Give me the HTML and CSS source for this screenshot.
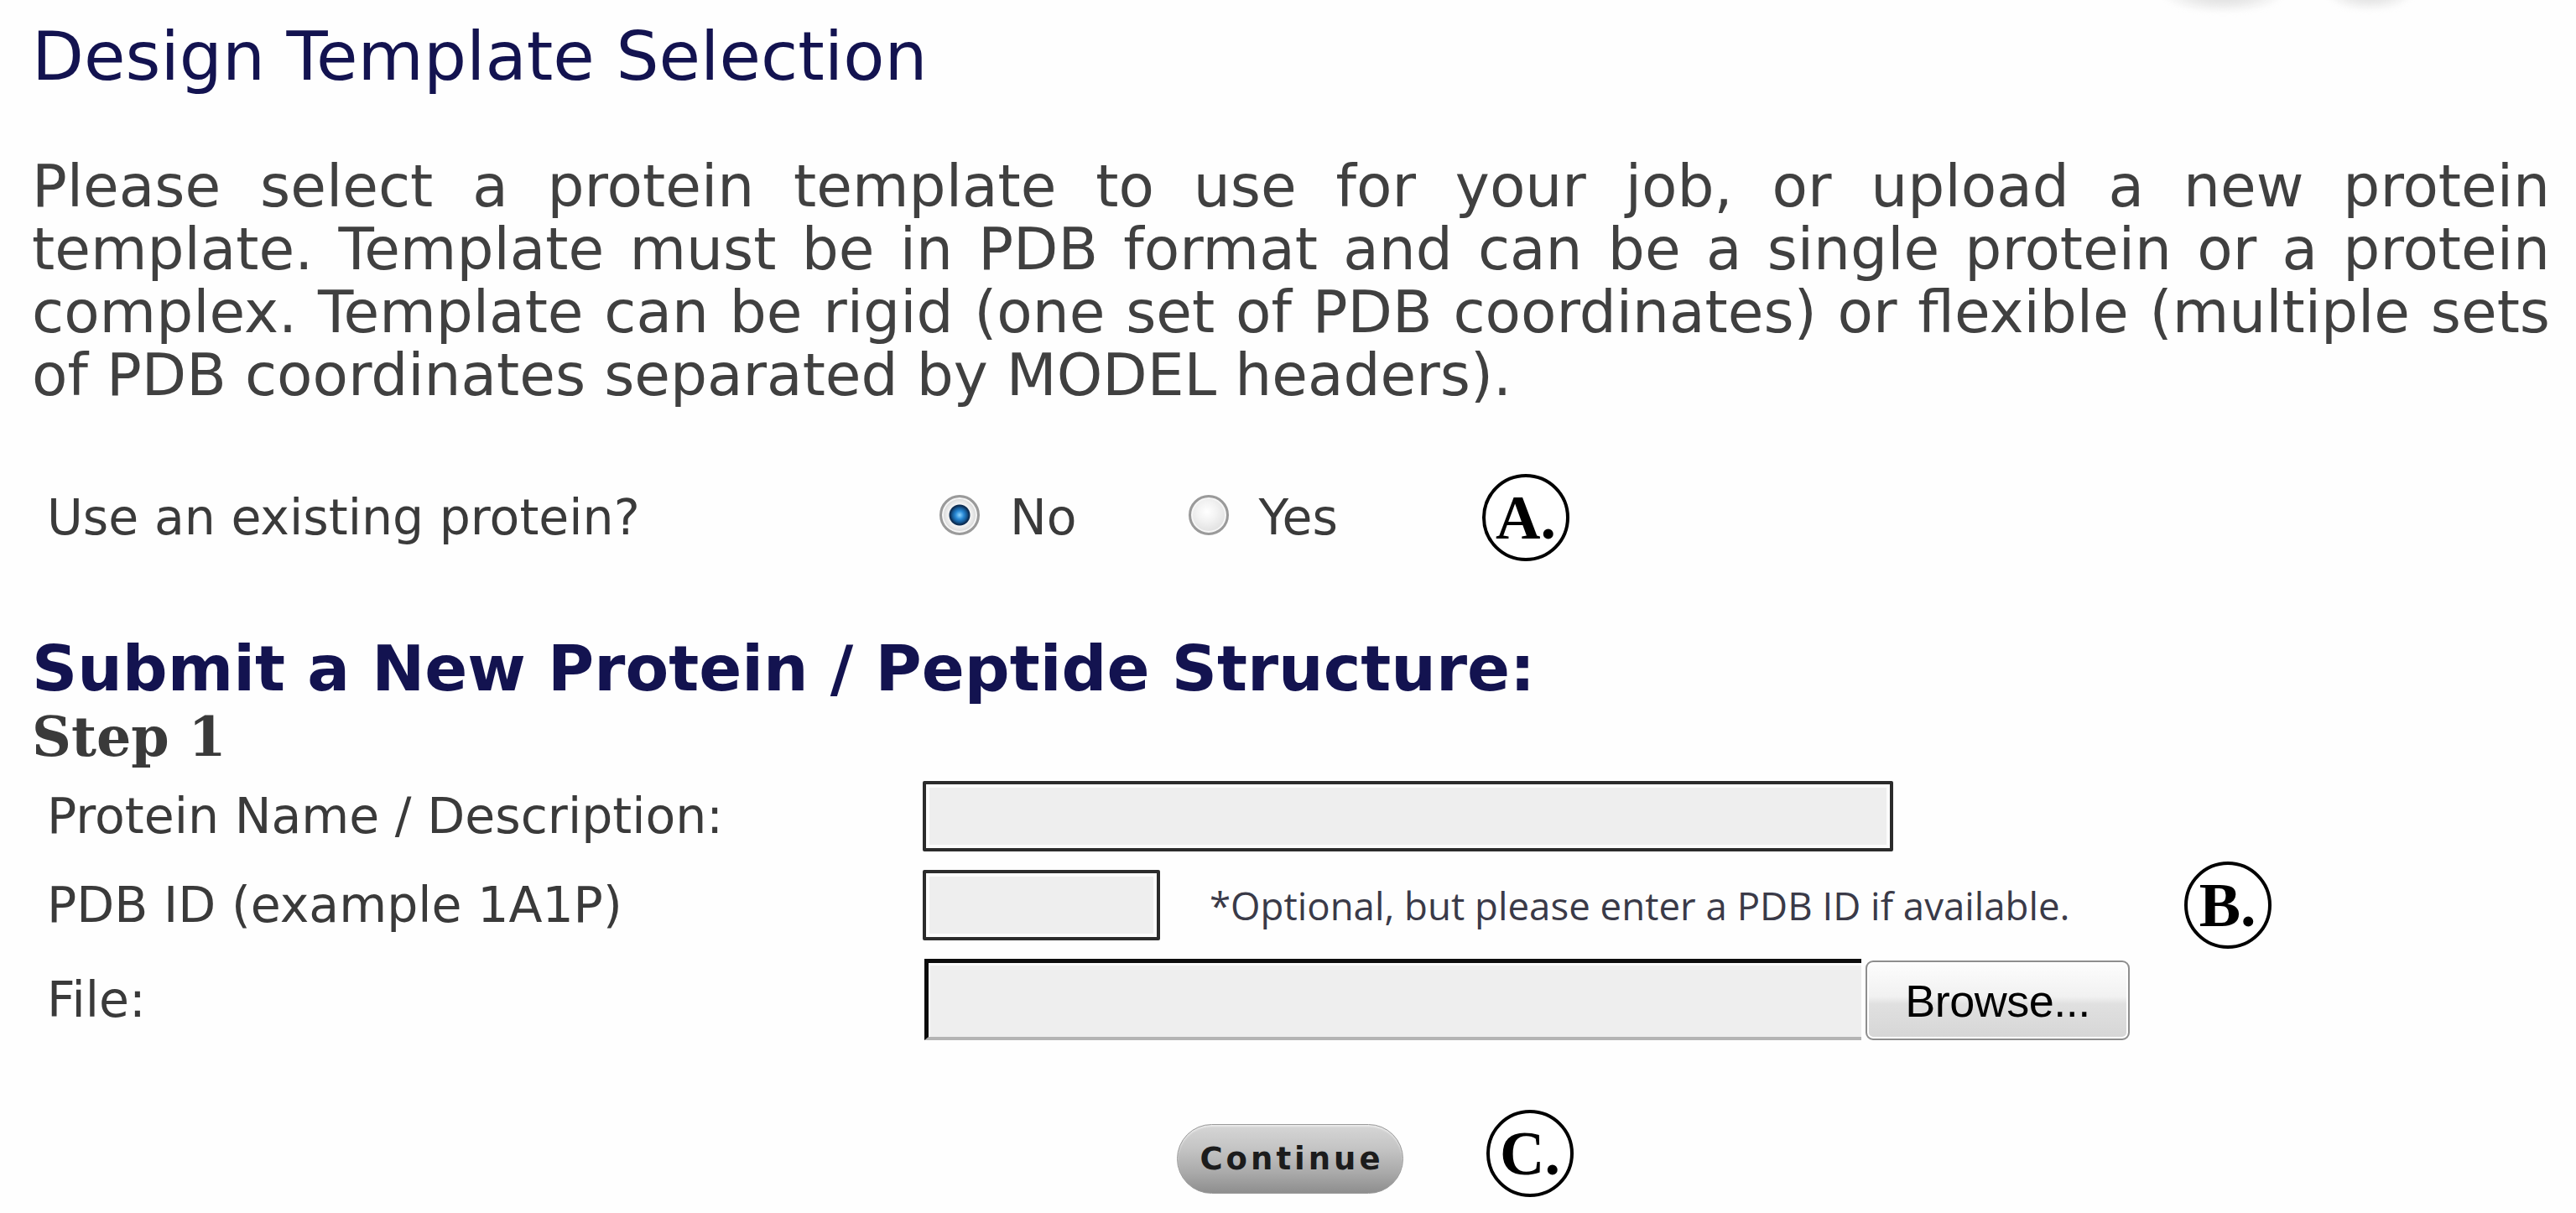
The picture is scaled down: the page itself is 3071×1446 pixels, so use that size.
FILE: index.html
```html
<!DOCTYPE html>
<html lang="en">
<head>
<meta charset="utf-8">
<title>Design Template Selection</title>
<link rel="stylesheet" href="styles.css">
</head>
<body>
<div class="page">
  <div class="logo-shadow" aria-hidden="true">
    <span class="blob blob-one"></span>
    <span class="blob blob-two"></span>
  </div>

  <h1 class="title">Design Template Selection</h1>

  <p class="intro">Please select a protein template to use for your job, or upload a new protein template. Template must be in PDB format and can be a single protein or a protein complex. Template can be rigid (one set of PDB coordinates) or flexible (multiple sets of PDB coordinates separated by MODEL headers).</p>

  <div class="row choice-row">
    <span class="row-label">Use an existing protein?</span>
    <div class="radios">
      <label class="radio"><input type="radio" name="existing" checked><span class="radio-text">No</span></label>
      <label class="radio radio-yes"><input type="radio" name="existing"><span class="radio-text">Yes</span></label>
    </div>
    <span class="badge badge-a">A.</span>
  </div>

  <h2 class="section-title">Submit a New Protein / Peptide Structure:</h2>
  <h3 class="step">Step 1</h3>

  <div class="form">
    <div class="row">
      <span class="row-label">Protein Name / Description:</span>
      <input class="text-input name-input" type="text">
    </div>
    <div class="row">
      <span class="row-label">PDB ID (example 1A1P)</span>
      <input class="text-input pdb-input" type="text">
      <span class="note">*Optional, but please enter a PDB ID if available.</span>
      <span class="badge badge-b">B.</span>
    </div>
    <div class="row">
      <span class="row-label">File:</span>
      <div class="file-field">
        <span class="file-path"></span>
        <button class="browse" type="button">Browse...</button>
      </div>
    </div>
  </div>

  <div class="actions">
    <button class="continue" type="button">Continue</button>
    <span class="badge badge-c">C.</span>
  </div>
</div>
</body>
</html>
```

FILE: styles.css
```css
html, body {
  margin: 0;
  padding: 0;
  background: #fefefe;
}

.page {
  position: relative;
  width: 3071px;
  height: 1446px;
  box-sizing: border-box;
  padding: 19px 31px 0 38px;
  font-family: "DejaVu Sans", Verdana, sans-serif;
  color: #404040;
  overflow: hidden;
}

.logo-shadow {
  position: absolute;
  top: 0;
  left: 2560px;
  width: 400px;
  height: 30px;
}

.blob {
  position: absolute;
  top: -26px;
  height: 40px;
  border-radius: 50%;
  background: radial-gradient(ellipse at center, #dcdcdc 0%, #ececec 45%, rgba(254,254,254,0) 75%);
  filter: blur(3px);
}

.blob-one {
  left: 20px;
  width: 140px;
}

.blob-two {
  left: 215px;
  width: 100px;
  top: -28px;
}

.title {
  margin: 0;
  font-size: 80.5px;
  line-height: 96px;
  font-weight: normal;
  color: #131350;
}

.intro {
  margin: 70px 0 0 0;
  font-size: 69.4px;
  line-height: 75px;
  text-align: justify;
  color: #404040;
}

.row {
  display: flex;
  align-items: center;
  padding-left: 18px;
}

.row-label {
  flex: none;
  width: 1044px;
  font-size: 58.5px;
  line-height: 66px;
  color: #3a3a3a;
}

.choice-row {
  margin-top: 80px;
  min-height: 104px;
}

.radios {
  display: flex;
  align-items: center;
  margin-left: 20px;
}

.radio {
  display: flex;
  align-items: center;
  gap: 36px;
  font-size: 58.5px;
  line-height: 66px;
  color: #3a3a3a;
}

.radio-yes {
  margin-left: 133px;
}

.radio input {
  appearance: none;
  -webkit-appearance: none;
  margin: -6px 0 0 0;
  width: 48px;
  height: 48px;
  border-radius: 50%;
  border: 3px solid #9a9a9a;
  box-sizing: border-box;
  background: radial-gradient(circle at 45% 40%, #ffffff 0%, #f2f2f2 35%, #d4d4d4 100%);
  box-shadow: inset 0 0 0 2px #f6f6f6;
}

.radio input:checked {
  background: radial-gradient(circle at 50% 50%, #8fd6ff 0px, #2a8ad6 5px, #14558f 9px, #0e2f55 11px, #0e2f55 12px, #f4f4f4 13px, #e4e4e4 17px, #cfcfcf 21px);
}

.badge {
  flex: none;
  display: flex;
  align-items: center;
  justify-content: center;
  width: 104px;
  height: 104px;
  box-sizing: border-box;
  border: 4px solid #000;
  border-radius: 50%;
  font-family: "Liberation Serif", "Times New Roman", serif;
  font-weight: bold;
  font-size: 74px;
  line-height: 1;
  color: #000;
  background: #fff;
}

.badge-a {
  margin-left: 172px;
}

.section-title {
  margin: 88px 0 0 0;
  font-size: 75.3px;
  line-height: 80px;
  font-weight: bold;
  color: #131350;
}

.step {
  margin: 5px 0 0 0;
  font-family: "DejaVu Serif", Georgia, serif;
  font-size: 65px;
  line-height: 72px;
  font-weight: bold;
  color: #3a3a3a;
}

.form {
  margin-top: 17px;
  display: flex;
  flex-direction: column;
  gap: 22px;
}

.text-input {
  display: block;
  margin: 0;
  height: 84px;
  box-sizing: border-box;
  border: 4px solid #2b2b2b;
  border-radius: 2px;
  background: #eeeeee;
  box-shadow: inset 0 0 0 4px #fbfbfb;
  padding: 0 12px;
  font-size: 40px;
}

.name-input {
  width: 1157px;
}

.pdb-input {
  width: 283px;
}

.note {
  margin-left: 59px;
  font-family: "Open Sans", "Noto Sans", sans-serif;
  font-size: 45.6px;
  line-height: 62px;
  color: #3a3a48;
  white-space: nowrap;
}

.badge-b {
  margin: -10px 0 -10px 136px;
}

.file-field {
  display: flex;
  align-items: stretch;
  height: 97px;
  margin-left: 2px;
}

.file-path {
  width: 1117px;
  box-sizing: border-box;
  border-top: 5px solid #0c0c0c;
  border-left: 5px solid #0c0c0c;
  border-bottom: 4px solid #b4b4b4;
  background: #eeeeee;
  box-shadow: inset 2px 3px 0 #fbfbfb;
}

.browse {
  margin: 2px 0 0 5px;
  width: 315px;
  box-sizing: border-box;
  border: 2px solid #8e8e8e;
  border-radius: 9px;
  background: linear-gradient(to bottom, #fdfdfd 0%, #f1f1f1 45%, #e0e0e0 55%, #d6d6d6 100%);
  box-shadow: inset 0 0 0 2px #ffffff;
  font-family: "Liberation Sans", Arial, sans-serif;
  font-size: 54px;
  letter-spacing: -0.5px;
  color: #000;
  padding: 0;
}

.actions {
  display: flex;
  align-items: center;
  margin-top: 83px;
  padding-left: 1365px;
}

.continue {
  margin-top: 13px;
  width: 270px;
  height: 83px;
  border: 1px solid #9a9a9a;
  border-radius: 42px;
  background: linear-gradient(to bottom, #d6d6d6 0%, #c4c4c4 35%, #aaaaaa 70%, #8e8e8e 100%);
  box-shadow: inset 0 2px 2px rgba(255,255,255,0.5);
  font-family: "DejaVu Sans", Verdana, sans-serif;
  font-weight: bold;
  font-size: 37px;
  letter-spacing: 4px;
  color: #1c1c1c;
  padding: 0 0 0 4px;
}

.badge-c {
  margin-left: 99px;
}
```
